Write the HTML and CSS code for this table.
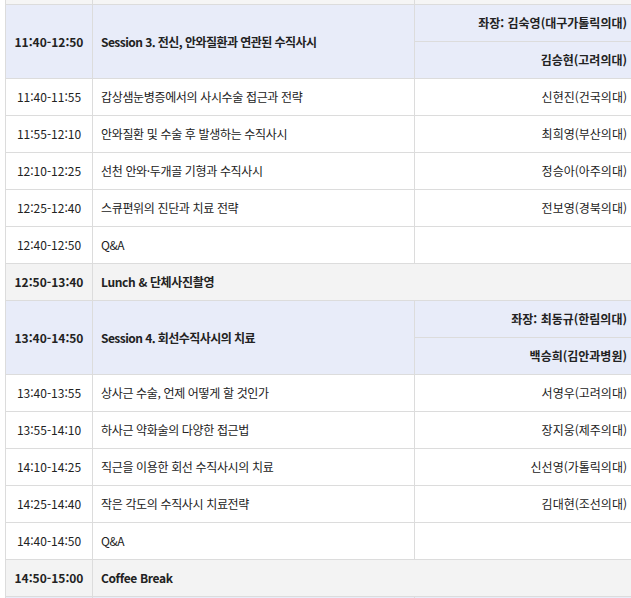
FILE: index.html
```html
<!DOCTYPE html>
<html lang="ko">
<head>
<meta charset="utf-8">
<link rel="stylesheet" href="styles.css">
</head>
<body>
<div class="wrap">
<table class="program">
  <colgroup><col class="c-time"><col class="c-title"><col class="c-spk"></colgroup>
  <tbody>
    <tr class="prev"><td class="time"></td><td class="title"></td><td class="spk"></td></tr>
    <tr class="sess"><td class="time" rowspan="2">11:40-12:50</td><td class="title" rowspan="2">Session 3. 전신, 안와질환과 연관된 수직사시</td><td class="spk">좌장: 김숙영(대구가톨릭의대)</td></tr>
    <tr class="sess"><td class="spk">김승현(고려의대)</td></tr>
    <tr><td class="time">11:40-11:55</td><td class="title">갑상샘눈병증에서의 사시수술 접근과 전략</td><td class="spk">신현진(건국의대)</td></tr>
    <tr><td class="time">11:55-12:10</td><td class="title">안와질환 및 수술 후 발생하는 수직사시</td><td class="spk">최희영(부산의대)</td></tr>
    <tr><td class="time">12:10-12:25</td><td class="title">선천 안와·두개골 기형과 수직사시</td><td class="spk">정승아(아주의대)</td></tr>
    <tr><td class="time">12:25-12:40</td><td class="title">스큐편위의 진단과 치료 전략</td><td class="spk">전보영(경북의대)</td></tr>
    <tr><td class="time">12:40-12:50</td><td class="title">Q&amp;A</td><td class="spk"></td></tr>
    <tr class="brk"><td class="time">12:50-13:40</td><td colspan="2" class="title">Lunch &amp; 단체사진촬영</td></tr>
    <tr class="sess"><td class="time" rowspan="2">13:40-14:50</td><td class="title" rowspan="2">Session 4. 회선수직사시의 치료</td><td class="spk">좌장: 최동규(한림의대)</td></tr>
    <tr class="sess"><td class="spk">백승희(김안과병원)</td></tr>
    <tr><td class="time">13:40-13:55</td><td class="title">상사근 수술, 언제 어떻게 할 것인가</td><td class="spk">서영우(고려의대)</td></tr>
    <tr><td class="time">13:55-14:10</td><td class="title">하사근 약화술의 다양한 접근법</td><td class="spk">장지웅(제주의대)</td></tr>
    <tr><td class="time">14:10-14:25</td><td class="title">직근을 이용한 회선 수직사시의 치료</td><td class="spk">신선영(가톨릭의대)</td></tr>
    <tr><td class="time">14:25-14:40</td><td class="title">작은 각도의 수직사시 치료전략</td><td class="spk">김대현(조선의대)</td></tr>
    <tr><td class="time">14:40-14:50</td><td class="title">Q&amp;A</td><td class="spk"></td></tr>
    <tr class="brk"><td class="time">14:50-15:00</td><td colspan="2" class="title">Coffee Break</td></tr>
    <tr class="sess"><td class="time"></td><td class="title"></td><td class="spk"></td></tr>
  </tbody>
</table>
</div>
</body>
</html>
```
FILE: styles.css
```css
html, body {
  margin: 0;
  padding: 0;
  background: #fff;
  overflow: hidden;
}
.wrap {
  height: 598px;
  overflow: hidden;
  padding-left: 5px;
}
.program {
  border-collapse: collapse;
  table-layout: fixed;
  width: 640px;
  margin-top: -33px;
  font-family: "Noto Sans CJK KR", "Noto Sans", sans-serif;
  font-size: 12px;
  color: #222;
}
.c-time { width: 87px; }
.c-title { width: 322px; }
.program td {
  border: 1px solid #dcdcdc;
  height: 37px;
  padding: 0 8px;
  box-sizing: border-box;
  line-height: 16px;
  vertical-align: middle;
  white-space: nowrap;
}
.program td.time {
  text-align: center;
  padding: 0;
}
.program td.title {
  letter-spacing: -0.35px;
}
.program td.spk {
  text-align: right;
  padding-right: 17px;
}
.program tr.prev td {
  background: #f5f5f5;
}
.program tr.sess td {
  background: #e8ecf9;
  font-weight: bold;
}
.program tr.sess td.title {
  letter-spacing: -0.55px;
}
.program tr.brk td {
  background: #f3f3f3;
  font-weight: bold;
}
```
